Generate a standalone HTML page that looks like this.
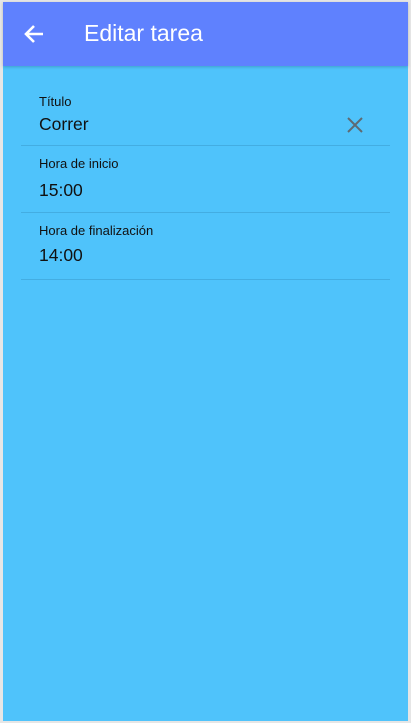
<!DOCTYPE html>
<html><head><meta charset="utf-8"><style>
html,body{margin:0;padding:0;width:411px;height:723px;overflow:hidden;background:#e6e6e6;font-family:"Liberation Sans",Arial,sans-serif}
.app{position:absolute;left:3px;top:2px;width:405px;height:719px;background:#4fc3fb}
.hdr{position:absolute;left:0;top:0;width:405px;height:64px;background:#5f81fe;box-shadow:0 1px 3px rgba(0,0,0,.2)}
.title{position:absolute;left:81px;top:18px;color:#fff;font-size:23px}
.f{position:absolute;left:18px;width:369px;border-bottom:1px solid #43ade2}
.l{position:absolute;left:18px;font-size:13px;color:#111}
.v{position:absolute;left:18px;font-size:17.5px;color:#111}
</style></head><body><div class="app">
<div class="hdr">
<svg style="position:absolute;left:20px;top:21px" width="22" height="22" viewBox="0 0 22 22"><path d="M20 11H3M11 3L3 11L11 19" stroke="#fff" stroke-width="2.6" fill="none"/></svg>
<div class="title">Editar tarea</div>
</div>
<div class="f" style="top:84px;height:59px"><div class="l" style="top:8px">Título</div><div class="v" style="top:28px">Correr</div>
<svg style="position:absolute;left:326px;top:31px" width="16" height="16" viewBox="0 0 16 16"><path d="M1 1L15 15M15 1L1 15" stroke="#5e6a72" stroke-width="2" fill="none"/></svg></div>
<div class="f" style="top:144px;height:66px"><div class="l" style="top:10px">Hora de inicio</div><div class="v" style="top:34px">15:00</div></div>
<div class="f" style="top:211px;height:66px"><div class="l" style="top:10px">Hora de finalización</div><div class="v" style="top:32px">14:00</div></div>
</div></body></html>
